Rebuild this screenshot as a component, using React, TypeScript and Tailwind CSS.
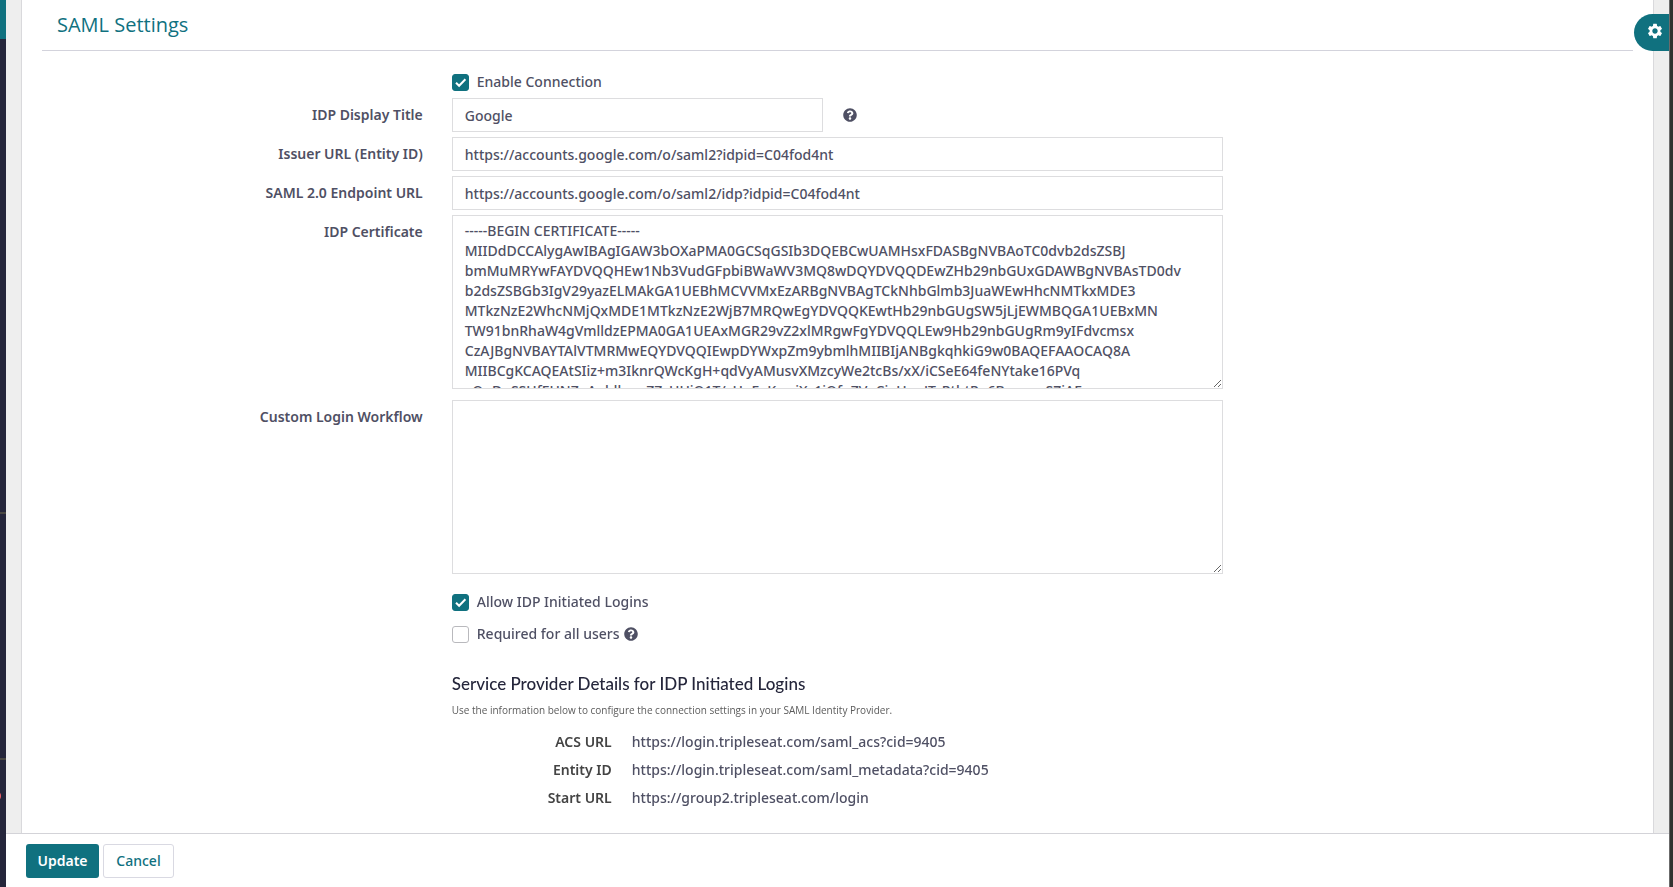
import { useState } from 'react';
import type { ReactNode } from 'react';
import { FaQuestionCircle } from 'react-icons/fa';
import { MdSettings } from 'react-icons/md';

const CERTIFICATE = `-----BEGIN CERTIFICATE-----
MIIDdDCCAlygAwIBAgIGAW3bOXaPMA0GCSqGSIb3DQEBCwUAMHsxFDASBgNVBAoTC0dvb2dsZSBJ
bmMuMRYwFAYDVQQHEw1Nb3VudGFpbiBWaWV3MQ8wDQYDVQQDEwZHb29nbGUxGDAWBgNVBAsTD0dv
b2dsZSBGb3IgV29yazELMAkGA1UEBhMCVVMxEzARBgNVBAgTCkNhbGlmb3JuaWEwHhcNMTkxMDE3
MTkzNzE2WhcNMjQxMDE1MTkzNzE2WjB7MRQwEgYDVQQKEwtHb29nbGUgSW5jLjEWMBQGA1UEBxMN
TW91bnRhaW4gVmlldzEPMA0GA1UEAxMGR29vZ2xlMRgwFgYDVQQLEw9Hb29nbGUgRm9yIFdvcmsx
CzAJBgNVBAYTAlVTMRMwEQYDVQQIEwpDYWxpZm9ybmlhMIIBIjANBgkqhkiG9w0BAQEFAAOCAQ8A
MIIBCgKCAQEAtSIiz+m3IknrQWcKgH+qdVyAMusvXMzcyWe2tcBs/xX/iCSeE64feNYtake16PVq
xQpDpSSUfEUNZpAoldbgwZZsUUjO1T/zHoEaKmriXz1iOfoZVoCiaUonJTcRthtRo6BxmcmS7jAE`;

const spDetails = [
  { label: 'ACS URL', value: 'https://login.tripleseat.com/saml_acs?cid=9405' },
  { label: 'Entity ID', value: 'https://login.tripleseat.com/saml_metadata?cid=9405' },
  { label: 'Start URL', value: 'https://group2.tripleseat.com/login' },
];

const inputClass = 'block h-[34px] w-full border border-[#dddddf] bg-white px-3 text-[#4f5064] outline-none focus:border-[#10717f]';
const textareaClass = 'block h-[174px] w-full resize border border-[#dddddf] bg-white px-3 py-[5px] leading-5 text-[#4f5064] outline-none focus:border-[#10717f] [scrollbar-width:none]';

function Field({ label, htmlFor, children }: { label?: string; htmlFor?: string; children: ReactNode }) {
  return (
    <div className="flex">
      <div className="w-1/4 shrink-0 pt-[7px] pr-[17px] text-right">
        {label && <label htmlFor={htmlFor} className="block leading-5 font-semibold">{label}</label>}
      </div>
      <div className="w-1/2 px-3">{children}</div>
    </div>
  );
}

function Checkbox({ id, label, checked, onChange, children }: { id: string; label: string; checked: boolean; onChange: (v: boolean) => void; children?: ReactNode }) {
  return (
    <div className="flex h-5 items-center">
      <span className="grid size-[17px] shrink-0">
        <input
          id={id}
          type="checkbox"
          checked={checked}
          onChange={(e) => onChange(e.target.checked)}
          className="col-start-1 row-start-1 size-[17px] appearance-none rounded-[3px] border border-[#b9b9bd] bg-white checked:border-[#10717f] checked:bg-[#10717f]"
        />
        {checked && (
          <svg viewBox="0 0 17 17" className="pointer-events-none col-start-1 row-start-1 size-[17px]" fill="none" stroke="white" strokeWidth="2">
            <path d="M4 8.8 7.1 11.8 13.4 5.3" />
          </svg>
        )}
      </span>
      <label htmlFor={id} className="ml-2">{label}</label>
      {children}
    </div>
  );
}

export default function App() {
  const [enabled, setEnabled] = useState(true);
  const [allowIdp, setAllowIdp] = useState(true);
  const [required, setRequired] = useState(false);
  const [title, setTitle] = useState('Google');
  const [issuer, setIssuer] = useState('https://accounts.google.com/o/saml2?idpid=C04fod4nt');
  const [endpoint, setEndpoint] = useState('https://accounts.google.com/o/saml2/idp?idpid=C04fod4nt');
  const [certificate, setCertificate] = useState(CERTIFICATE);
  const [workflow, setWorkflow] = useState('');

  return (
    <div className="relative flex h-screen overflow-hidden bg-[#eeeeee] font-['Noto_Sans',sans-serif] text-sm font-medium text-[#4f5064]">
      {/* Collapsed navigation */}
      <aside className="flex w-1.5 shrink-0 flex-col overflow-hidden bg-[#25263b]">
        <div className="h-[39px] bg-[#10717f]" />
        <div className="mt-[473px] h-0.5 bg-[#4a4843]" />
        <div className="mt-[244px] h-0.5 bg-[#4a4843]" />
        <div className="mt-[30px] -ml-[11px] size-3 rounded-full bg-[#f4626a]" />
      </aside>

      <div className="flex min-w-0 flex-1 flex-col">
        <main className="mx-[15px] min-h-0 flex-1 overflow-hidden border-x border-[#d9d9dc] bg-white px-5">
          <h1 className="h-[51px] border-b border-[#d3d3dc] px-[15px] pt-[9px] font-['Open_Sans',sans-serif] text-xl leading-8 font-normal text-[#10717f]">
            SAML Settings
          </h1>

          <form id="saml-form" className="flex flex-col gap-[5px] pt-[21px]" onSubmit={(e) => e.preventDefault()}>
            <div className="pb-px">
              <Field>
                <Checkbox id="enabled" label="Enable Connection" checked={enabled} onChange={setEnabled} />
              </Field>
            </div>
            <Field label="IDP Display Title" htmlFor="title">
              <div className="flex items-center gap-5">
                <div className="w-[371px]">
                  <input id="title" className={inputClass} value={title} onChange={(e) => setTitle(e.target.value)} />
                </div>
                <FaQuestionCircle size={14} />
              </div>
            </Field>
            <Field label="Issuer URL (Entity ID)" htmlFor="issuer">
              <input id="issuer" className={inputClass} value={issuer} onChange={(e) => setIssuer(e.target.value)} />
            </Field>
            <Field label="SAML 2.0 Endpoint URL" htmlFor="endpoint">
              <input id="endpoint" className={inputClass} value={endpoint} onChange={(e) => setEndpoint(e.target.value)} />
            </Field>
            <Field label="IDP Certificate" htmlFor="certificate">
              <textarea id="certificate" className={textareaClass} value={certificate} onChange={(e) => setCertificate(e.target.value)} />
            </Field>
            <div className="pt-1.5">
              <Field label="Custom Login Workflow" htmlFor="workflow">
                <textarea id="workflow" className={textareaClass} value={workflow} onChange={(e) => setWorkflow(e.target.value)} />
              </Field>
            </div>
            <Field>
              <div className="flex flex-col gap-3 pt-[13px]">
                <Checkbox id="allow-idp" label="Allow IDP Initiated Logins" checked={allowIdp} onChange={setAllowIdp} />
                <Checkbox id="required" label="Required for all users" checked={required} onChange={setRequired}>
                  <FaQuestionCircle size={14} className="ml-1" />
                </Checkbox>
              </div>

              <h2 className="pt-7 font-['Lato',sans-serif] text-[17px] leading-6 font-medium text-[#25263b]">
                Service Provider Details for IDP Initiated Logins
              </h2>
              <p className="pt-1 font-['Open_Sans',sans-serif] text-[10px] leading-5 text-[#5b5b5b]">
                Use the information below to configure the connection settings in your SAML Identity Provider.
              </p>
              <dl className="flex flex-col gap-2 pt-3">
                {spDetails.map((d) => (
                  <div key={d.label} className="flex gap-5 leading-5">
                    <dt className="w-40 text-right font-semibold text-[#444444]">{d.label}</dt>
                    <dd>{d.value}</dd>
                  </div>
                ))}
              </dl>
            </Field>
          </form>
        </main>

        <footer className="flex h-[54px] shrink-0 gap-1 border-t border-[#d3d3d8] bg-white px-5 pt-2.5">
          <button type="submit" form="saml-form" className="h-[34px] w-[73px] rounded-[3px] bg-[#10717f] font-semibold text-white">Update</button>
          <button type="button" className="h-[34px] w-[71px] rounded-[3px] border border-[#d9d9e2] bg-white text-[#10717f]">Cancel</button>
        </footer>
      </div>

      <div className="w-1 shrink-0 border-l border-[#6b6b6b] bg-[#333330]" />

      <button type="button" aria-label="Settings" className="absolute top-3.5 right-1 flex h-[37px] w-[35px] items-center rounded-l-full bg-[#10717f] pb-1 pl-3 text-white">
        <MdSettings size={18} />
      </button>
    </div>
  );
}
